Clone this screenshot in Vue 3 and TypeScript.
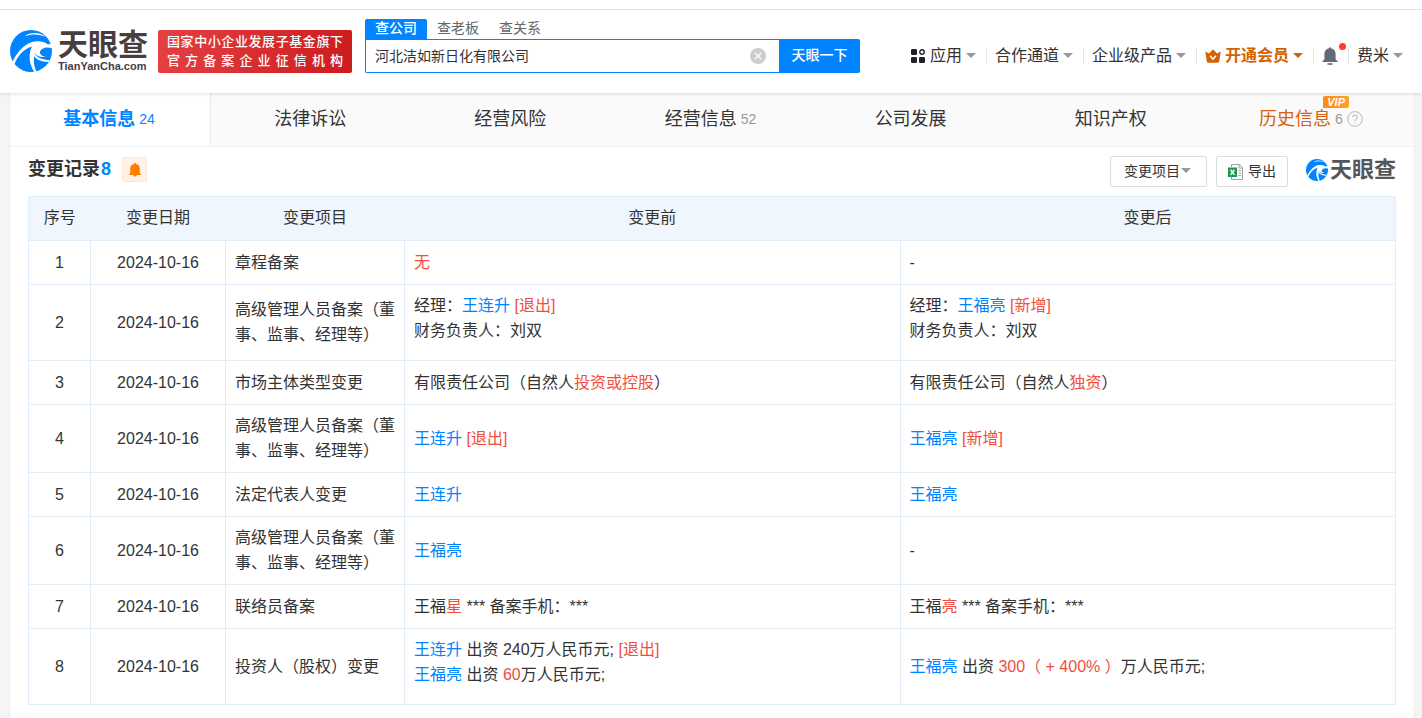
<script setup lang="ts">
import { ref } from 'vue'

interface Part {
  t: string
  k?: 'link' | 'red'
}
type Line = Part[]
interface Row {
  item: string
  before: Line[]
  after: Line[]
}

const keyword = ref('河北洁如新日化有限公司')
const filter = ref('')
const date = '2024-10-16'

const searchTabs = ['查公司', '查老板', '查关系']
const menus = ['合作通道', '企业级产品']

const tabs = [
  { name: '基本信息', count: 24 },
  { name: '法律诉讼' },
  { name: '经营风险' },
  { name: '经营信息', count: 52 },
  { name: '公司发展' },
  { name: '知识产权' },
  { name: '历史信息', count: 6, vip: true },
]

const link = (t: string): Part => ({ t, k: 'link' })
const red = (t: string): Part => ({ t, k: 'red' })
const txt = (t: string): Part => ({ t })

const manager = '高级管理人员备案（董事、监事、经理等）'
const rows: Row[] = [
  { item: '章程备案', before: [[red('无')]], after: [[txt('-')]] },
  {
    item: manager,
    before: [[txt('经理：'), link('王连升'), red(' [退出]')], [txt('财务负责人：刘双')]],
    after: [[txt('经理：'), link('王福亮'), red(' [新增]')], [txt('财务负责人：刘双')]],
  },
  {
    item: '市场主体类型变更',
    before: [[txt('有限责任公司（自然人'), red('投资或控股'), txt('）')]],
    after: [[txt('有限责任公司（自然人'), red('独资'), txt('）')]],
  },
  { item: manager, before: [[link('王连升'), red(' [退出]')]], after: [[link('王福亮'), red(' [新增]')]] },
  { item: '法定代表人变更', before: [[link('王连升')]], after: [[link('王福亮')]] },
  { item: manager, before: [[link('王福亮')]], after: [[txt('-')]] },
  {
    item: '联络员备案',
    before: [[txt('王福'), red('星'), txt(' *** 备案手机：***')]],
    after: [[txt('王福'), red('亮'), txt(' *** 备案手机：***')]],
  },
  {
    item: '投资人（股权）变更',
    before: [
      [link('王连升'), txt(' 出资 240万人民币元; '), red('[退出]')],
      [link('王福亮'), txt(' 出资 '), red('60'), txt('万人民币元;')],
    ],
    after: [[link('王福亮'), txt(' 出资 '), red('300（ + 400% ）'), txt('万人民币元;')]],
  },
]
</script>

<template>
  <div class="page">
    <svg class="defs" aria-hidden="true">
      <symbol id="swirl" viewBox="0 0 42 42">
        <circle cx="21" cy="21" r="21" fill="#0084ff" />
        <g fill="#fff">
          <path d="M15 6C21 1.500 31 2.500 36 7C30 4 22 3.500 15 6Z" />
          <path d="M2.500 32C7 22 14 14.500 22 12C28 10.500 34 11.500 38 14.500L43 13V18L37.500 17.500C33 17.500 30 20 30 22.500C30 25 33 26.500 36 26.500C32 27.500 27 26.500 24.500 23.500C23 31 24 37 27 42.500L24.500 42.500C19 34 18 25 22 16.500C14 19 8 25 4.500 34Z" />
          <path d="M23 22C27 28 33 30 39.500 30L38.500 32C31 32 25 29 22.500 24Z" />
        </g>
      </symbol>
    </svg>

    <header class="header">
      <a class="logo" href="#" aria-label="天眼查 TianYanCha.com">
        <svg class="logo-mark"><use href="#swirl" /></svg>
        <span class="logo-words">
          <span class="logo-cn">天眼查</span>
          <span class="logo-en">TianYanCha.com</span>
        </span>
      </a>
      <div class="banner">
        <span>国家中小企业发展子基金旗下</span>
        <span>官方备案企业征信机构</span>
      </div>

      <form class="search" @submit.prevent>
        <div class="search-tabs">
          <button v-for="(s, i) in searchTabs" :key="s" type="button" :class="{ on: i === 0 }">{{ s }}</button>
        </div>
        <div class="search-row">
          <div class="field">
            <input v-model="keyword" type="text" aria-label="搜索公司" />
            <button type="button" class="clear" aria-label="清空" @click="keyword = ''">
              <svg viewBox="0 0 16 16" width="16" height="16">
                <circle cx="8" cy="8" r="8" fill="#ccc" />
                <path d="M4.800 4.800l6.400 6.400M11.200 4.800l-6.400 6.400" stroke="#fff" stroke-width="1.300" />
              </svg>
            </button>
          </div>
          <button class="go" type="submit">天眼一下</button>
        </div>
      </form>

      <nav class="menu">
        <a href="#">
          <svg class="apps" viewBox="0 0 14 14" width="14" height="14" fill="#1f2329">
            <rect x="0" y="0" width="6" height="6" rx="1.200" />
            <rect x="0" y="8" width="6" height="6" rx="1.200" />
            <rect x="8" y="8" width="6" height="6" rx="1.200" />
            <circle cx="11" cy="3" r="2.200" fill="none" stroke="#1f2329" stroke-width="1.400" />
          </svg>
          应用<i class="caret"></i>
        </a>
        <a v-for="m in menus" :key="m" href="#">{{ m }}<i class="caret"></i></a>
        <a href="#" class="member">
          <svg viewBox="0 0 16 14" width="16" height="14">
            <path d="M0.300 2.600L4 4.600L8 0.200L12 4.600L15.700 2.600L14.200 12.400Q14 13.800 12.600 13.800H3.400Q2 13.800 1.800 12.400Z" fill="#d46200" />
            <path d="M5 6.800L8 10L11 6.800" fill="none" stroke="#fff" stroke-width="1.600" />
          </svg>
          开通会员<i class="caret"></i>
        </a>
        <a href="#" class="bell" aria-label="消息">
          <svg viewBox="0 0 16 18" width="16" height="18" fill="#626a75">
            <path d="M7 1.200a1 1 0 0 1 2 0C12 1.800 13.600 4.200 13.600 7V12.600L15.500 14V15H0.500V14L2.400 12.600V7C2.400 4.200 4 1.800 7 1.200Z" />
            <rect x="5.500" y="16.200" width="5" height="1.600" />
          </svg>
          <b class="dot"></b>
        </a>
        <a href="#">费米<i class="caret"></i></a>
      </nav>
    </header>

    <main class="panel">
      <nav class="tabs">
        <a v-for="(t, i) in tabs" :key="t.name" href="#" :class="{ on: i === 0, vip: t.vip }">
          <span class="tab-name">{{ t.name }}<em v-if="t.vip" class="badge">VIP</em></span>
          <small v-if="t.count">{{ t.count }}</small>
          <svg v-if="t.vip" class="help" viewBox="0 0 16 16" width="16" height="16" fill="none" stroke="#c4c8cd" stroke-width="1.300">
            <circle cx="8" cy="8" r="7.300" />
            <path d="M5.700 6.300a2.300 2.300 0 1 1 3.500 2C8.300 8.800 8 9.100 8 10M8 11.200V12.600" />
          </svg>
        </a>
      </nav>

      <section class="records">
        <div class="title-row">
          <h2>变更记录<span>8</span></h2>
          <button class="alert" type="button" aria-label="监控">
            <svg viewBox="0 0 12 14" width="12" height="14" fill="#ff7f00">
              <path d="M5 1a1 1 0 0 1 2 0C9.500 1.400 10.800 3.300 10.800 5.500V10.300L12 11.400V12H8A2 1.600 0 0 1 4 12H0V11.400L1.200 10.300V5.500C1.200 3.300 2.500 1.400 5 1Z" />
            </svg>
          </button>
          <div class="tools">
            <div class="select">
              <select v-model="filter" aria-label="变更项目">
                <option value="">变更项目</option>
              </select>
              <i class="caret"></i>
            </div>
            <button class="export" type="button">
              <svg viewBox="0 0 16 16" width="16" height="16">
                <path d="M3.500 3V0.500H11.500L14.500 3.500V15.500H3.500V13" fill="#fff" stroke="#9aa0a6" />
                <path d="M11 0.500V4H14.500M10.500 6.500H13M10.500 9H13M10.500 11.500H13" fill="none" stroke="#9aa0a6" />
                <rect x="0" y="3.500" width="9" height="9.500" fill="#1a9c50" />
                <path d="M2.600 5.800L6.400 10.700M6.400 5.800L2.600 10.700" stroke="#fff" stroke-width="1.400" />
              </svg>
              导出
            </button>
            <span class="mini-logo">
              <svg><use href="#swirl" /></svg>天眼查
            </span>
          </div>
        </div>

        <table>
          <colgroup>
            <col class="c-no" /><col class="c-date" /><col class="c-item" /><col /><col />
          </colgroup>
          <thead>
            <tr>
              <th>序号</th>
              <th>变更日期</th>
              <th>变更项目</th>
              <th>变更前</th>
              <th>变更后</th>
            </tr>
          </thead>
          <tbody>
            <tr v-for="(r, i) in rows" :key="i">
              <td class="mid">{{ i + 1 }}</td>
              <td class="mid">{{ date }}</td>
              <td>{{ r.item }}</td>
              <td v-for="(cell, c) in [r.before, r.after]" :key="c">
                <div :class="{ multi: cell.length > 1 }">
                  <div v-for="(line, l) in cell" :key="l" class="line"><template v-for="(p, k) in line" :key="k"><a v-if="p.k === 'link'" href="#">{{ p.t }}</a><span v-else :class="p.k">{{ p.t }}</span></template></div>
                </div>
              </td>
            </tr>
          </tbody>
        </table>
      </section>
    </main>
  </div>
</template>

<style>
body {
  background: #f5f5f5;
}
</style>

<style scoped>
.page {
  min-height: 100vh;
  font-family: 'Liberation Sans', 'Noto Sans CJK SC', sans-serif;
  font-size: 16px;
  line-height: 25px;
  color: #333;
  display: flex;
  flex-direction: column;
}
.page * {
  box-sizing: border-box;
}
.defs {
  position: absolute;
  width: 0;
  height: 0;
}
a {
  color: inherit;
  text-decoration: none;
}
button,
input,
select {
  font: inherit;
  color: inherit;
  border: 0;
  margin: 0;
  padding: 0;
  background: none;
  outline: none;
}
.caret {
  border: 5px solid transparent;
  border-top-color: #999;
  border-bottom: 0;
}

.header {
  position: relative;
  display: flex;
  align-items: flex-start;
  background: #fff;
  margin-top: 9px;
  border-top: 1px solid #e2e2e2;
  box-shadow: 0 -9px 0 #fff, 0 1px 4px rgba(0, 0, 0, 0.12);
  padding: 9px 19px 20px 10px;
  white-space: nowrap;
}
.logo {
  display: flex;
  margin-top: 11px;
}
.logo-mark {
  width: 42px;
  height: 42px;
}
.logo-words {
  display: flex;
  flex-direction: column;
  width: 90px;
  margin-left: 6px;
  color: #473f3f;
  font-weight: 700;
}
.logo-cn {
  font-size: 30px;
  line-height: 29px;
}
.logo-en {
  font-size: 11px;
  line-height: 14px;
}
.banner {
  width: 194px;
  margin: 11px 0 0 10px;
  padding: 2px 9px 3px;
  border-radius: 2px;
  background: linear-gradient(100deg, #e54044, #cc1c1e);
  color: #fff;
  font-size: 13px;
  line-height: 19px;
  font-weight: 500;
}
.banner span {
  display: block;
  text-align: justify;
  text-align-last: justify;
}
.search {
  width: 495px;
  margin-left: 13px;
  font-size: 14px;
}
.search-tabs {
  display: flex;
  color: #666;
}
.search-tabs button {
  height: 20px;
  padding: 0 10px 2px;
  line-height: 18px;
}
.search-tabs .on {
  background: #0084ff;
  color: #fff;
  font-weight: 500;
  border-radius: 2px 2px 0 0;
}
.search-row {
  display: flex;
  height: 34px;
}
.field {
  flex: 1;
  display: flex;
  align-items: center;
  padding: 0 13px 0 9px;
  border: 1px solid #0084ff;
  border-right: 0;
  border-radius: 0 0 0 2px;
}
.field input {
  flex: 1;
}
.clear {
  display: flex;
}
.go {
  width: 81px;
  padding-bottom: 2px;
  background: #0084ff;
  color: #fff;
  font-weight: 500;
  border-radius: 0 2px 2px 0;
}
.menu {
  display: flex;
  align-items: center;
  margin: 24px 0 0 auto;
}
.menu a {
  display: flex;
  align-items: center;
}
.menu a + a::before {
  content: '';
  width: 1px;
  height: 14px;
  margin: 0 8px 0 10px;
  background: #dde3e8;
}
.menu .caret {
  margin-left: 4px;
}
.apps {
  margin-right: 5px;
}
.menu .member {
  color: #d46200;
  font-weight: 700;
}
.member svg {
  margin-right: 4px;
}
.member .caret {
  border-top-color: #d46200;
}
.bell {
  position: relative;
}
.dot {
  position: absolute;
  right: -8px;
  top: -4px;
  width: 7px;
  height: 7px;
  border-radius: 50%;
  background: #ff3b30;
}

.panel {
  flex: 1;
  margin: 0 7px 0 9px;
  background: #fff;
  border: solid #ebebeb;
  border-width: 0 1px;
}
.tabs {
  display: flex;
  padding-right: 2px;
  background: #fafafa;
  border-bottom: 1px solid #f2f2f2;
  font-size: 18px;
}
.tabs a {
  flex: 1;
  display: flex;
  justify-content: center;
  align-items: center;
  height: 53px;
  padding: 0 2px 1px 0;
}
.tabs .on {
  background: #fff;
  border-right: 1px solid #ebebeb;
  color: #0084ff;
  font-weight: 700;
}
.tabs small {
  margin-left: 4px;
  font-size: 14px;
  font-weight: 400;
  color: #999;
}
.tabs .on small {
  color: #0084ff;
}
.tabs .vip {
  color: #d9610f;
}
.tab-name {
  position: relative;
}
.badge {
  position: absolute;
  right: -18px;
  top: -11px;
  padding: 0 4px;
  border-radius: 2px 2px 2px 0;
  background: linear-gradient(90deg, #ff8a14, #ffa02c);
  color: #fff;
  font-size: 11px;
  line-height: 12px;
  font-weight: 700;
}
.help {
  margin-left: 4px;
}

.records {
  padding: 9px 18px 12px;
}
.title-row {
  display: flex;
  align-items: flex-start;
  height: 40px;
}
h2 {
  margin: 0;
  font-size: 18px;
  line-height: 27px;
}
h2 span {
  color: #0084ff;
  margin-left: 1px;
}
.alert {
  display: flex;
  align-items: center;
  justify-content: center;
  width: 25px;
  height: 25px;
  margin: 1px 0 0 11px;
  border: 1px solid #ffe6d2;
  border-radius: 2px;
  background: #fff3e9;
}
.tools {
  display: flex;
  margin-left: auto;
  font-size: 14px;
}
.select {
  position: relative;
  width: 97px;
  height: 31px;
}
.select select {
  appearance: none;
  width: 100%;
  height: 100%;
  padding: 0 13px 1px;
  border: 1px solid #dcdcdc;
  border-radius: 2px;
}
.select .caret {
  position: absolute;
  right: 16px;
  top: 12px;
  pointer-events: none;
}
.export {
  display: flex;
  align-items: center;
  gap: 4px;
  height: 31px;
  margin-left: 9px;
  padding: 0 11px;
  border: 1px solid #dcdcdc;
  border-radius: 2px;
}
.mini-logo {
  display: flex;
  align-items: center;
  height: 27px;
  margin-left: 18px;
  font-size: 22px;
  font-weight: 700;
  color: #55565c;
}
.mini-logo svg {
  width: 22px;
  height: 22px;
  margin-right: 2px;
}

table {
  width: 100%;
  table-layout: fixed;
  border-collapse: collapse;
}
.c-no {
  width: 62px;
}
.c-date {
  width: 135px;
}
.c-item {
  width: 179px;
}
th {
  height: 44px;
  padding: 0 0 2px;
  background: #eff6fd;
  border-bottom: 1px solid #e1edf8;
  font-weight: 400;
}
thead tr {
  border: 1px solid #e1edf8;
}
td {
  height: 44px;
  padding: 8px 9px 9px;
  border: 1px solid #e1edf8;
}
.mid {
  text-align: center;
}
.line {
  white-space: pre-wrap;
}
.multi {
  margin-bottom: 8px;
}
td a {
  color: #0084ff;
}
.red {
  color: #f04e3e;
}
</style>
